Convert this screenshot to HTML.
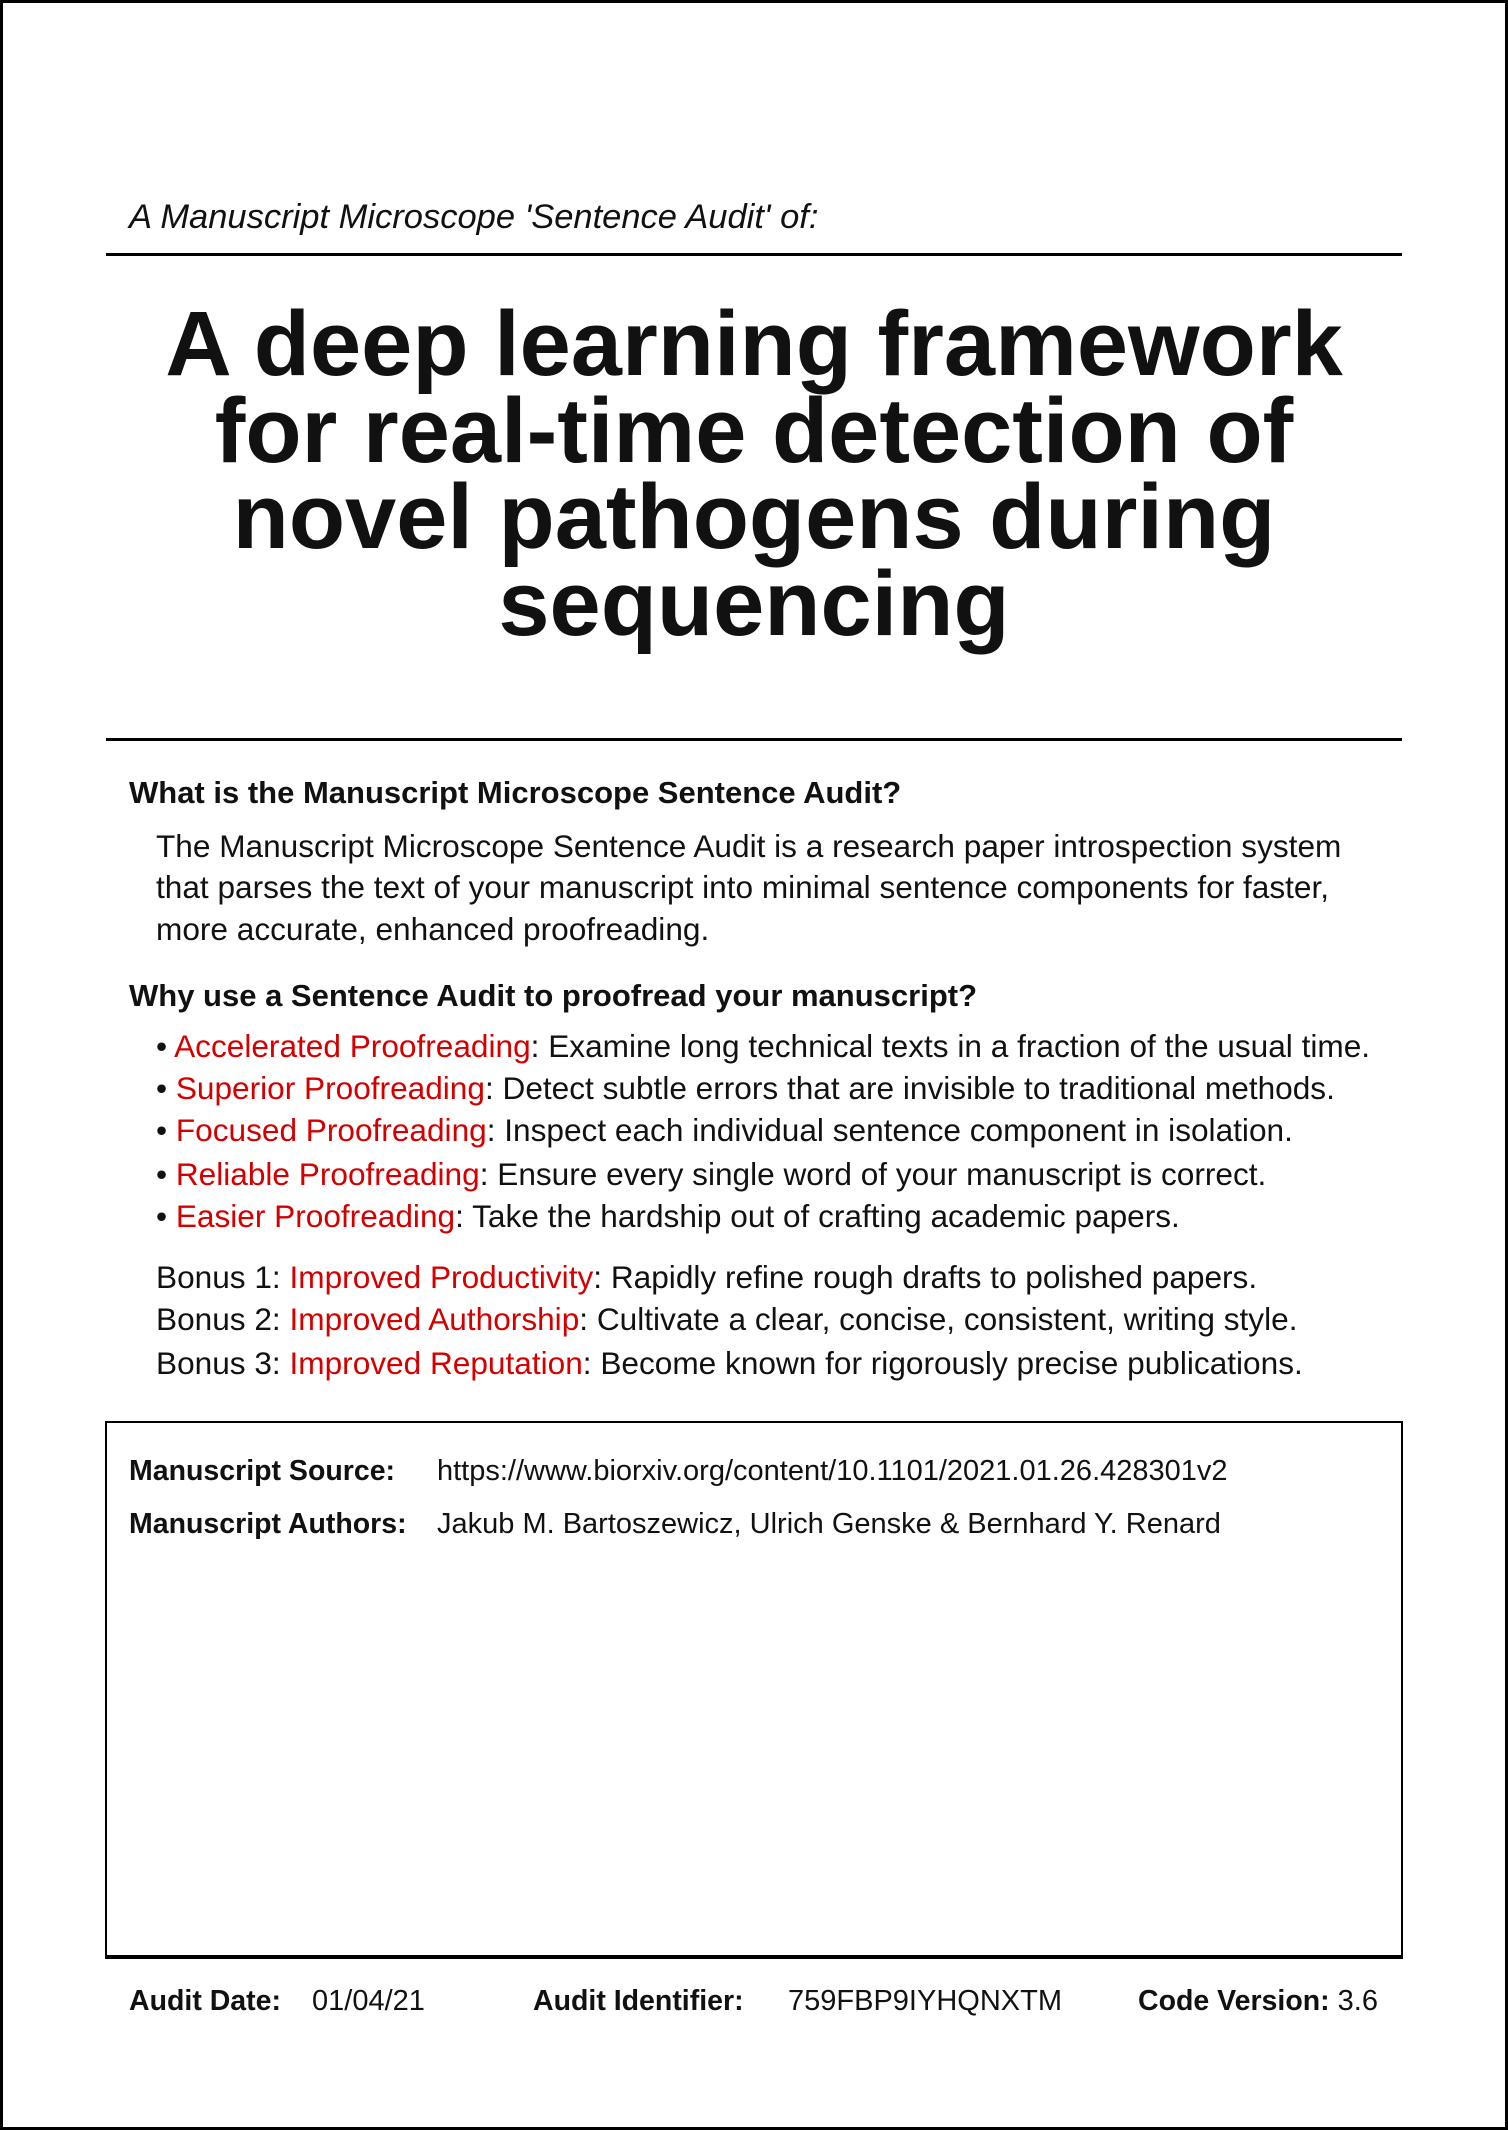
<!DOCTYPE html>
<html><head><meta charset="utf-8"><style>
html,body{margin:0;padding:0;background:#fff}
body{width:1508px;height:2130px;position:relative;overflow:hidden;font-family:"Liberation Sans",sans-serif;color:#111}
.frame{position:absolute;left:0;top:0;width:1502px;height:2124px;border:3px solid #000}
.t{position:absolute;white-space:nowrap;line-height:40px;height:40px}
.r{color:#d40000}
.hr{position:absolute;left:106px;width:1296px;height:3px;background:#000}
.title{position:absolute;left:0;width:1508px;text-align:center;font-weight:bold;font-size:92px;line-height:86.5px;top:301px}
.b{font-weight:bold}
.body{font-size:31.6px}
.h{font-size:31px;font-weight:bold}
.box{position:absolute;left:105px;top:1421px;width:1294px;height:532px;border:2px solid #000;border-bottom-width:4px}
.s{font-size:29px}
.sl{font-size:28.5px;font-weight:bold}
</style></head><body>
<div class="frame"></div>
<div class="t" style="left:129px;top:197px;font-size:34.5px;font-style:italic">A Manuscript Microscope 'Sentence Audit' of:</div>
<div class="hr" style="top:253px"></div>
<div class="title">A deep learning framework<br>for real-time detection of<br>novel pathogens during<br>sequencing</div>
<div class="hr" style="top:738px"></div>
<div class="t h" style="left:129px;top:773px">What is the Manuscript Microscope Sentence Audit?</div>
<div class="t body" style="left:156px;top:826px">The Manuscript Microscope Sentence Audit is a research paper introspection system</div>
<div class="t body" style="left:156px;top:867px">that parses the text of your manuscript into minimal sentence components for faster,</div>
<div class="t body" style="left:156px;top:909px">more accurate, enhanced proofreading.</div>
<div class="t h" style="left:129px;top:976px">Why use a Sentence Audit to proofread your manuscript?</div>
<div class="t body" style="left:156px;top:1026px">• <span class="r">Accelerated Proofreading</span>: Examine long technical texts in a fraction of the usual time.</div>
<div class="t body" style="left:156px;top:1068px">• <span class="r">Superior Proofreading</span>: Detect subtle errors that are invisible to traditional methods.</div>
<div class="t body" style="left:156px;top:1110px">• <span class="r">Focused Proofreading</span>: Inspect each individual sentence component in isolation.</div>
<div class="t body" style="left:156px;top:1154px">• <span class="r">Reliable Proofreading</span>: Ensure every single word of your manuscript is correct.</div>
<div class="t body" style="left:156px;top:1196px">• <span class="r">Easier Proofreading</span>: Take the hardship out of crafting academic papers.</div>
<div class="t body" style="left:156px;top:1257px">Bonus 1: <span class="r">Improved Productivity</span>: Rapidly refine rough drafts to polished papers.</div>
<div class="t body" style="left:156px;top:1299px">Bonus 2: <span class="r">Improved Authorship</span>: Cultivate a clear, concise, consistent, writing style.</div>
<div class="t body" style="left:156px;top:1343px">Bonus 3: <span class="r">Improved Reputation</span>: Become known for rigorously precise publications.</div>
<div class="box"></div>
<div class="t sl" style="left:129px;top:1451px">Manuscript Source:</div>
<div class="t s" style="left:437px;top:1451px">https://www.biorxiv.org/content/10.1101/2021.01.26.428301v2</div>
<div class="t sl" style="left:129px;top:1504px">Manuscript Authors:</div>
<div class="t s" style="left:437px;top:1504px">Jakub M. Bartoszewicz, Ulrich Genske &amp; Bernhard Y. Renard</div>
<div class="t sl" style="left:129px;top:1981px">Audit Date:</div>
<div class="t s" style="left:312px;top:1981px">01/04/21</div>
<div class="t sl" style="left:533px;top:1981px">Audit Identifier:</div>
<div class="t s" style="left:788px;top:1981px">759FBP9IYHQNXTM</div>
<div class="t s" style="left:1138px;top:1981px"><span class="b" style="font-size:28.5px">Code Version:</span> 3.6</div>
</body></html>
